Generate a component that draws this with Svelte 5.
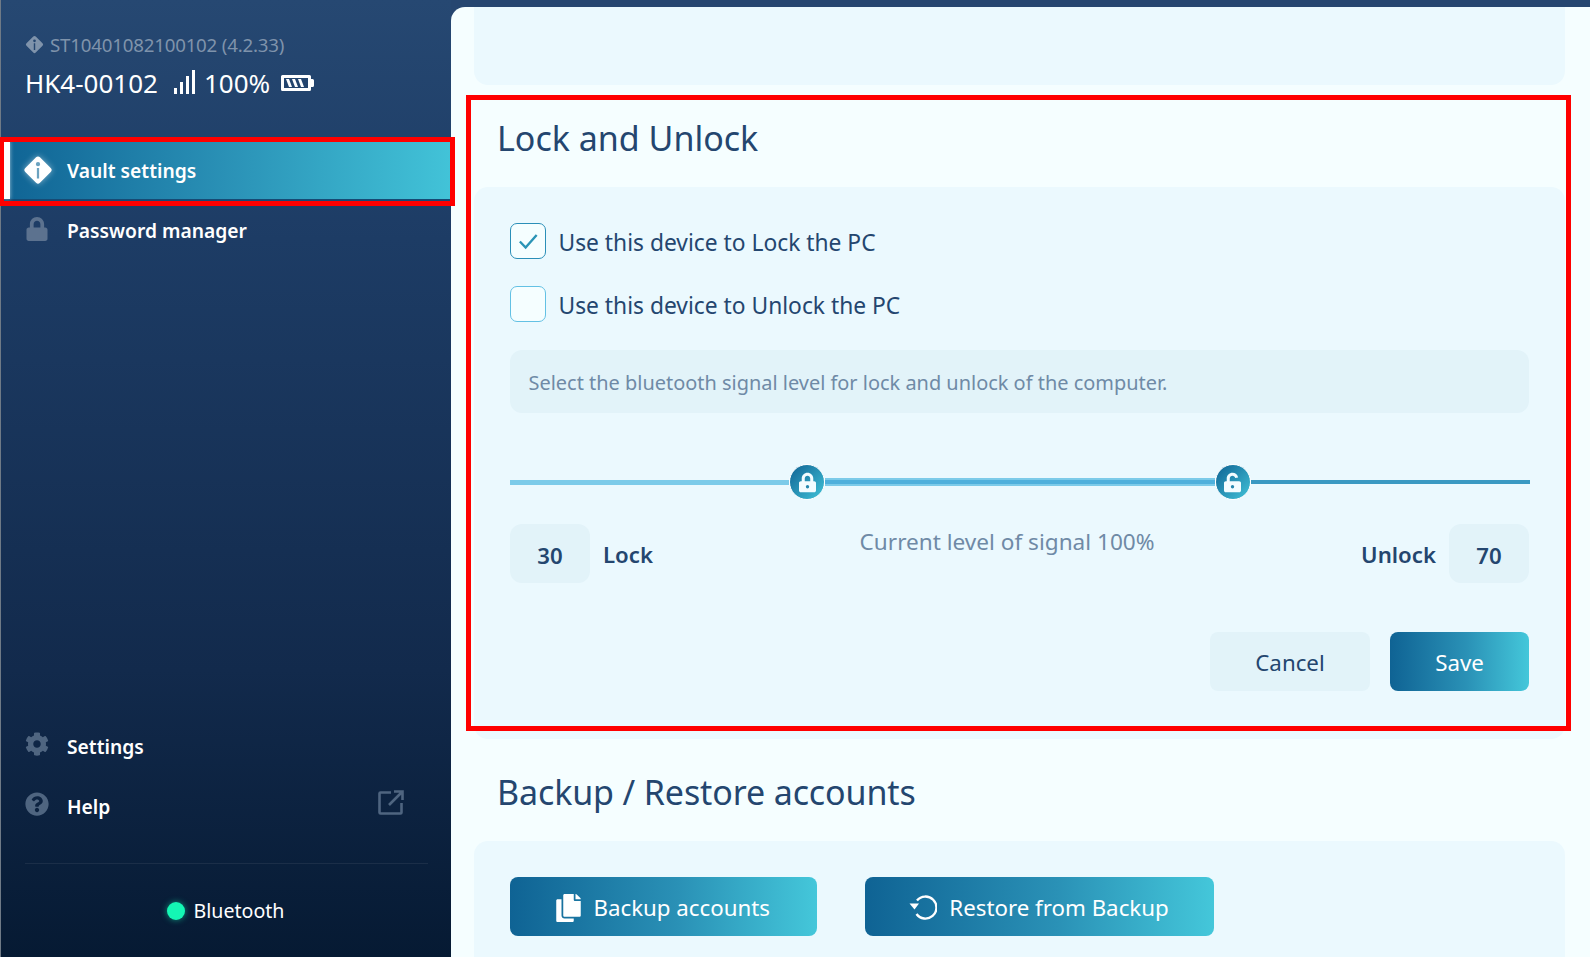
<script>
  const cog = "M487.4 315.7l-42.6-24.6c4.3-23.2 4.3-47 0-70.2l42.6-24.6c4.9-2.8 7.1-8.6 5.5-14-11.1-35.6-30-67.8-54.7-94.6-3.8-4.1-10-5.1-14.8-2.3L380.8 110c-17.9-15.4-38.5-27.3-60.8-35.1V25.8c0-5.6-3.9-10.5-9.4-11.7-36.7-8.2-74.3-7.8-109.2 0-5.5 1.2-9.4 6.1-9.4 11.7V75c-22.2 7.9-42.8 19.8-60.8 35.1L88.7 85.5c-4.9-2.8-11-1.9-14.8 2.3-24.7 26.7-43.6 58.9-54.7 94.6-1.7 5.4.6 11.2 5.5 14L67.3 221c-4.3 23.2-4.3 47 0 70.2l-42.6 24.6c-4.9 2.8-7.1 8.6-5.5 14 11.1 35.6 30 67.8 54.7 94.6 3.8 4.1 10 5.1 14.8 2.3l42.6-24.6c17.9 15.4 38.5 27.3 60.8 35.1v49.2c0 5.6 3.9 10.5 9.4 11.7 36.7 8.2 74.3 7.8 109.2 0 5.5-1.2 9.4-6.1 9.4-11.7v-49.2c22.2-7.9 42.8-19.8 60.8-35.1l42.6 24.6c4.9 2.8 11 1.9 14.8-2.3 24.7-26.7 43.6-58.9 54.7-94.6 1.5-5.5-.7-11.3-5.6-14.1zM256 336c-44.1 0-80-35.9-80-80s35.9-80 80-80 80 35.9 80 80-35.9 80-80 80z";
  const question = "M504 256c0 136.997-111.043 248-248 248S8 392.997 8 256C8 119.083 119.043 8 256 8s248 111.083 248 248zM262.655 90c-54.497 0-89.255 22.957-116.549 63.758-3.536 5.286-2.353 12.415 2.715 16.258l34.699 26.31c5.205 3.947 12.621 3.008 16.665-2.122 17.864-22.658 30.113-35.797 57.303-35.797 20.429 0 45.698 13.148 45.698 32.958 0 14.976-12.363 22.667-32.534 33.976C247.128 238.528 216 254.941 216 296v4c0 6.627 5.373 12 12 12h56c6.627 0 12-5.373 12-12v-1.333c0-28.462 83.186-29.647 83.186-106.667 0-58.002-60.165-102-116.531-102zM256 338c-25.365 0-46 20.635-46 46 0 25.364 20.635 46 46 46s46-20.636 46-46c0-25.365-20.635-46-46-46z";
  const lock = "M400 224h-24v-72C376 68.2 307.8 0 224 0S72 68.2 72 152v72H48c-26.5 0-48 21.5-48 48v192c0 26.5 21.5 48 48 48h352c26.5 0 48-21.5 48-48V272c0-26.5-21.5-48-48-48zm-104 0H152v-72c0-39.7 32.3-72 72-72s72 32.3 72 72v72z";
  const diamond = "M12 1.2a2.2 2.2 0 0 1 1.55.64l8.6 8.6a2.2 2.2 0 0 1 0 3.12l-8.6 8.6a2.2 2.2 0 0 1-3.1 0l-8.6-8.6a2.2 2.2 0 0 1 0-3.12l8.6-8.6A2.2 2.2 0 0 1 12 1.2zM12 5.6a1.7 1.7 0 1 0 0 3.4 1.7 1.7 0 0 0 0-3.4zM11.100 10.400v8.400h1.800v-8.400z";
</script>

<div class="app">
  <aside class="side">
    <header class="head">
      <div class="serial">
        <svg class="serial-ico" viewBox="0 0 24 24"><path fill-rule="evenodd" d={diamond} /></svg>
        <span>ST10401082100102 (4.2.33)</span>
      </div>
      <div class="device">
        <span>HK4-00102</span>
        <svg class="signal" viewBox="0 0 22 24"><path d="M0 18h3v6H0zM6 12h3v12H6zM12 6h3v18h-3zM18 0h3v24h-3z" /></svg>
        <span>100%</span>
        <svg class="battery" viewBox="0 0 33 16">
          <path fill-rule="evenodd" d="M1.5 0h27A1.5 1.5 0 0 1 30 1.5V4h1.5A1.5 1.5 0 0 1 33 5.500v5a1.500 1.500 0 0 1-1.500 1.500H30v2.500a1.500 1.500 0 0 1-1.500 1.500h-27A1.500 1.500 0 0 1 0 14.500v-13A1.500 1.500 0 0 1 1.500 0zM3 3v10h24V3z" />
          <path d="M5 4h3l3 8H8zM11 4h3l3 8h-3zM17 4h3l3 8h-3z" />
        </svg>
      </div>
    </header>

    <nav class="nav">
      <div class="item active">
        <svg class="ico diamond-ico" viewBox="0 0 24 24"><path fill-rule="evenodd" d={diamond} /></svg>
        <span>Vault settings</span>
      </div>
      <div class="item pw">
        <svg class="ico lock-ico" viewBox="0 0 448 512"><path d={lock} /></svg>
        <span>Password manager</span>
      </div>
    </nav>

    <nav class="nav bottom">
      <div class="item">
        <svg class="ico" viewBox="0 0 512 512"><path d={cog} /></svg>
        <span>Settings</span>
      </div>
      <div class="item">
        <svg class="ico" viewBox="0 0 512 512"><path d={question} /></svg>
        <span>Help</span>
        <svg class="ext" viewBox="0 0 26 26"><path d="M13 2.500H2.500a1 1 0 0 0-1 1v19a1 1 0 0 0 1 1h20a1 1 0 0 0 1-1V13M11 15 23.500 2.500M16 1.500h8.500V10" /></svg>
      </div>
    </nav>

    <footer class="foot">
      <i class="dot"></i>
      <span>Bluetooth</span>
    </footer>
  </aside>

  <main class="main">
    <div class="card top-card"></div>

    <h2>Lock and Unlock</h2>
    <section class="card lock-card">
      <div class="check-row">
        <span class="box checked">
          <svg viewBox="0 0 24 24"><path d="M4.500 12.500 9.800 18 20 6.500" /></svg>
        </span>
        <span>Use this device to Lock the PC</span>
      </div>
      <div class="check-row second">
        <span class="box"></span>
        <span>Use this device to Unlock the PC</span>
      </div>

      <p class="hint">Select the bluetooth signal level for lock and unlock of the computer.</p>

      <div class="slider">
        <span class="seg seg-a"></span>
        <span class="knob">
          <svg viewBox="0 0 448 512"><path fill-rule="evenodd" d={lock} /><circle cx="224" cy="368" r="44" class="hole" /></svg>
        </span>
        <span class="seg seg-b"></span>
        <span class="knob">
          <svg viewBox="0 0 448 512"><path d="M400 224h-248v-72c0-39.700 32.300-72 72-72 35 0 64 25 70.500 58l78.500-15C360 55 298 0 224 0 140.200 0 72 68.200 72 152v72H48c-26.500 0-48 21.500-48 48v192c0 26.500 21.500 48 48 48h352c26.500 0 48-21.500 48-48V272c0-26.500-21.500-48-48-48z" /><circle cx="224" cy="368" r="44" class="hole" /></svg>
        </span>
        <span class="seg seg-c"></span>
      </div>

      <div class="levels">
        <div class="level">
          <span class="val">30</span>
          <span class="lbl">Lock</span>
        </div>
        <span class="current">Current level of signal 100%</span>
        <div class="level">
          <span class="lbl">Unlock</span>
          <span class="val">70</span>
        </div>
      </div>

      <div class="actions">
        <button class="btn cancel">Cancel</button>
        <button class="btn grad save">Save</button>
      </div>
    </section>

    <h2>Backup / Restore accounts</h2>
    <section class="card backup-card">
      <button class="btn grad wide a">
        <svg viewBox="0 0 448 512"><path d="M320 448v40c0 13.255-10.745 24-24 24H24c-13.255 0-24-10.745-24-24V120c0-13.255 10.745-24 24-24h72v296c0 30.879 25.121 56 56 56h168zm0-344V0H152c-13.255 0-24 10.745-24 24v368c0 13.255 10.745 24 24 24h272c13.255 0 24-10.745 24-24V128H344c-13.200 0-24-10.800-24-24zm120.971-31.029L375.029 7.029A24 24 0 0 0 358.059 0H352v96h96v-6.059a24 24 0 0 0-7.029-16.970z" /></svg>
        <span>Backup accounts</span>
      </button>
      <button class="btn grad wide b">
        <svg class="restore" viewBox="0 0 28 27"><path class="ring" d="M8 6.500A11 11 0 1 1 7.500 20" /><path class="tip" d="M0.500 9.500h9.500L5.500 15.500z" /></svg>
        <span>Restore from Backup</span>
      </button>
    </section>
  </main>

  <div class="mark mark-nav"></div>
  <div class="mark mark-card"></div>
</div>

<style>
  :global(body) {
    margin: 0;
    background: #264670;
  }

  .app {
    position: relative;
    display: flex;
    width: 1590px;
    height: 957px;
    overflow: hidden;
    font-family: "Noto Sans", "Open Sans", sans-serif;
    background: #264670;
  }

  .side {
    flex: 0 0 451px;
    display: flex;
    flex-direction: column;
    box-sizing: border-box;
    border-left: 1px solid #6f7a86;
    background: linear-gradient(180deg, #264872 0%, #1d3c65 25%, #122a4c 70%, #061a33 100%);
    color: #fff;
  }

  .head {
    box-sizing: border-box;
    height: 141px;
    padding: 32px 0 0 24px;
  }

  .serial {
    display: flex;
    align-items: center;
    gap: 6px;
    height: 24px;
    font-size: 18.700px;
    color: #7f93ab;
    letter-spacing: -0.2px;
  }

  .serial-ico {
    width: 19px;
    height: 19px;
    margin-top: 1px;
    fill: #7f93ab;
  }

  .device {
    display: flex;
    align-items: center;
    height: 36px;
    margin-top: 9px;
    font-size: 26px;
  }

  .signal {
    width: 22px;
    height: 24px;
    margin: -3px 8px 0 16px;
    fill: #fff;
  }

  .battery {
    width: 33px;
    height: 16px;
    margin-left: 11px;
    fill: #fff;
  }

  .item {
    position: relative;
    display: flex;
    align-items: center;
    box-sizing: border-box;
    height: 60px;
    padding-left: 24px;
    font-size: 19.250px;
    font-weight: 600;
  }

  .item > span {
    margin-left: 18px;
  }

  .pw {
    padding-bottom: 2px;
  }

  .pw .ico {
    margin-top: -2px;
  }

  .ico {
    width: 24px;
    height: 24px;
    margin-top: -4px;
    fill: #4f6580;
  }

  .lock-ico {
    fill: #5c728f;
  }

  .active {
    height: 60px;
    border-bottom: 2px solid #174a74;
    background: linear-gradient(90deg, #0f6394 0%, #2a91b6 50%, #42c3d8 100%);
  }

  .active::before {
    content: "";
    position: absolute;
    left: 3px;
    top: 0;
    bottom: 0;
    width: 6px;
    background: #fff;
    box-shadow: 0 0 4px rgba(255, 255, 255, 0.6);
  }

  .diamond-ico {
    width: 30px;
    height: 30px;
    margin: 0 -4px 0 -2px;
    fill: #fff;
    filter: drop-shadow(0 0 3px rgba(255, 255, 255, 0.5));
  }

  .bottom {
    margin-top: auto;
  }

  .ext {
    width: 26px;
    height: 26px;
    margin-left: auto;
    margin-right: 47px;
    margin-top: -6px;
    fill: none;
    stroke: #4f6580;
    stroke-width: 2.600;
  }

  .foot {
    display: flex;
    align-items: center;
    justify-content: center;
    gap: 9px;
    box-sizing: border-box;
    height: 94px;
    margin: 27px 23px 0 24px;
    border-top: 1px solid rgba(255, 255, 255, 0.07);
    font-size: 19.600px;
    padding-right: 2px;
  }

  .dot {
    width: 18px;
    height: 18px;
    border-radius: 50%;
    background: #14f7b4;
    box-shadow: 0 0 6px rgba(20, 247, 180, 0.55);
  }

  .main {
    flex: 1;
    margin-top: 7px;
    overflow: hidden;
    border-top-left-radius: 14px;
    background: #f5feff;
    padding: 0 25px 0 23px;
    color: #24466f;
  }

  .card {
    border-radius: 14px;
    background: #ebf9fe;
  }

  .top-card {
    height: 78px;
    border-top-left-radius: 0;
    border-top-right-radius: 0;
  }

  h2 {
    margin: 0;
    box-sizing: border-box;
    height: 102px;
    padding: 30px 0 0 23px;
    font-size: 34px;
    line-height: 46px;
    font-weight: 400;
  }

  .lock-card {
    padding: 36px 36px 48px 36px;
  }

  .lock-card ~ h2 {
    letter-spacing: -0.12px;
  }

  .check-row {
    display: flex;
    align-items: center;
    gap: 12.500px;
    height: 36px;
    font-size: 22.800px;
  }

  .check-row > span:last-child {
    padding-top: 3px;
  }

  .second {
    margin-top: 27px;
  }

  .box {
    box-sizing: border-box;
    flex: none;
    width: 36px;
    height: 36px;
    border: 1.500px solid #63c1e4;
    border-radius: 7px;
    background: #f5feff;
  }

  .checked {
    border-color: #2b8fb8;
    padding: 4px;
  }

  .checked svg {
    display: block;
    fill: none;
    stroke: #2a94b6;
    stroke-width: 2.200;
  }

  .hint {
    box-sizing: border-box;
    height: 63px;
    margin: 28px 0 0;
    padding: 0 18.500px;
    border-radius: 12px;
    background: #e2f3f9;
    color: #6f8aa6;
    font-size: 19.940px;
    line-height: 65px;
  }

  .slider {
    display: flex;
    align-items: center;
    height: 36px;
    margin: 51px -1px 0 0;
  }

  .seg {
    display: block;
  }

  .seg-a {
    flex: 280;
    height: 5px;
    background: #7ccbe9;
  }

  .seg-b {
    flex: 391;
    height: 8px;
    background: linear-gradient(180deg, #7ccbe9 0 20%, #4fb0dc 20% 80%, #7ccbe9 80%);
  }

  .seg-c {
    flex: 280;
    height: 4px;
    background: #3a99c2;
  }

  .knob {
    box-sizing: border-box;
    display: flex;
    align-items: center;
    justify-content: center;
    flex: none;
    width: 36px;
    height: 36px;
    border: 1.500px solid #fff;
    border-radius: 50%;
    background: linear-gradient(135deg, #0f6394, #42c3d8);
  }

  .knob svg {
    width: 17px;
    height: 21px;
    fill: #f3fcff;
  }

  .hole {
    fill: #2687ae;
  }

  .levels {
    display: flex;
    justify-content: space-between;
    margin-top: 24px;
  }

  .level {
    display: flex;
    align-items: center;
    gap: 13px;
    font-size: 22.200px;
    font-weight: 600;
  }

  .lbl {
    padding-top: 2px;
  }

  .val {
    width: 80px;
    height: 59px;
    border-radius: 12px;
    background: #e2f3f9;
    line-height: 64px;
    text-align: center;
  }

  .current {
    line-height: 36px;
    color: #6f8aa6;
    font-size: 22.600px;
  }

  .actions {
    display: flex;
    justify-content: flex-end;
    gap: 20px;
    margin-top: 49px;
  }

  .btn {
    box-sizing: border-box;
    height: 59px;
    border: 0;
    border-radius: 8px;
    padding: 2px 0 0;
    font: inherit;
    font-size: 22.300px;
  }

  .cancel {
    width: 160px;
    background: #e2f3f9;
    color: #24466f;
  }

  .grad {
    background: linear-gradient(90deg, #0f6394 0%, #2a91b6 55%, #44c7da 100%);
    color: #fff;
  }

  .save {
    width: 139px;
  }

  .backup-card {
    display: flex;
    gap: 48px;
    height: 180px;
    padding: 36px;
    box-sizing: border-box;
  }

  .wide {
    display: flex;
    align-items: center;
    justify-content: center;
    gap: 12px;
  }

  .a {
    width: 306.500px;
  }

  .b {
    width: 349px;
  }

  .wide svg {
    width: 25px;
    height: 28px;
    fill: #fff;
  }

  .wide svg.restore {
    width: 28px;
    height: 27px;
  }

  .ring {
    fill: none;
    stroke: #fff;
    stroke-width: 2.400;
  }

  .mark {
    position: absolute;
    box-sizing: border-box;
    border: 5px solid #ff0000;
    pointer-events: none;
  }

  .mark-nav {
    left: -1px;
    top: 137px;
    width: 456px;
    height: 69px;
  }

  .mark-card {
    left: 466px;
    top: 95px;
    width: 1105px;
    height: 636px;
  }
</style>
